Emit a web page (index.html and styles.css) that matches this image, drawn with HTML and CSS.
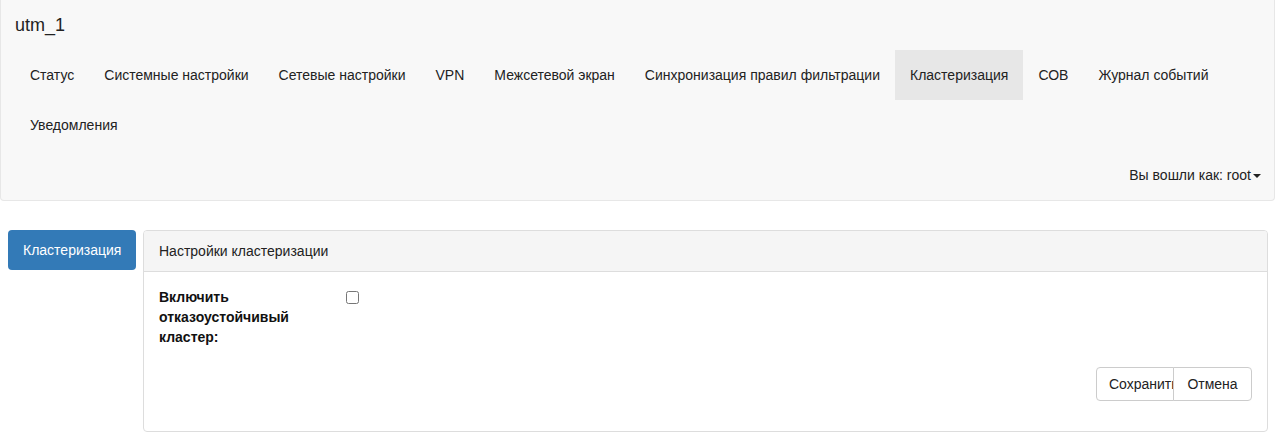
FILE: index.html
```html
<!DOCTYPE html>
<html lang="ru">
<head>
<meta charset="utf-8">
<title>utm_1</title>
<link rel="stylesheet" href="styles.css">
</head>
<body>
<nav class="navbar">
  <div class="brand-row"><a class="brand" href="#">utm_1</a></div>
  <ul class="nav">
    <li><a href="#">Статус</a></li>
    <li><a href="#">Системные настройки</a></li>
    <li><a href="#">Сетевые настройки</a></li>
    <li><a href="#">VPN</a></li>
    <li><a href="#">Межсетевой экран</a></li>
    <li><a href="#">Синхронизация правил фильтрации</a></li>
    <li class="active"><a href="#">Кластеризация</a></li>
    <li><a href="#">СОВ</a></li>
    <li><a href="#">Журнал событий</a></li>
    <li><a href="#">Уведомления</a></li>
  </ul>
  <div class="user-row"><a class="user" href="#">Вы вошли как: root<span class="caret"></span></a></div>
</nav>
<main class="layout">
  <aside class="side">
    <a class="pill" href="#">Кластеризация</a>
  </aside>
  <section class="panel">
    <div class="panel-heading">Настройки кластеризации</div>
    <div class="panel-body">
      <div class="form-row">
        <label class="form-label" for="ha">Включить отказоустойчивый кластер:</label>
        <div class="form-field"><input type="checkbox" id="ha" class="check"></div>
      </div>
      <div class="actions">
        <div class="btn-group">
          <button class="btn btn-save" type="button">Сохранить</button><button class="btn btn-cancel" type="button">Отмена</button>
        </div>
      </div>
    </div>
  </section>
</main>
</body>
</html>
```
FILE: styles.css
```css
* { box-sizing: border-box; }
html, body { margin: 0; padding: 0; }
body {
  font-family: "Liberation Sans", Arial, sans-serif;
  font-size: 14px;
  line-height: 20px;
  color: #333;
  background: #fff;
}
a { text-decoration: none; color: inherit; }

.navbar {
  background: #f8f8f8;
  border: 1px solid #e7e7e7;
  border-top: 0;
  border-radius: 0 0 4px 4px;
}
.brand-row { height: 50px; }
.brand {
  display: block;
  padding: 15px 14px;
  font-size: 18px;
  line-height: 20px;
  color: #222;
}
.nav {
  list-style: none;
  margin: 0;
  padding: 0 14px;
  display: flex;
  flex-wrap: wrap;
}
.nav a {
  display: block;
  padding: 15px;
  color: #222;
}
.nav .active a { background: #e7e7e7; }
.user-row {
  display: flex;
  justify-content: flex-end;
}
.user {
  display: block;
  padding: 15px 13px 15px 15px;
  color: #222;
}
.caret {
  display: inline-block;
  width: 0;
  height: 0;
  margin-left: 2px;
  vertical-align: middle;
  border-top: 4px solid #222;
  border-left: 4px solid transparent;
  border-right: 4px solid transparent;
}

.layout {
  display: flex;
  align-items: flex-start;
  gap: 7px;
  padding: 29px 7px 0 8px;
}
.side { width: 128px; flex: none; }
.pill {
  display: block;
  padding: 10px 15px;
  background: #337ab7;
  color: #fff;
  border-radius: 4px;
}
.panel {
  flex: 1;
  border: 1px solid #ddd;
  border-radius: 4px;
  background: #fff;
}
.panel-heading {
  padding: 10px 15px;
  background: #f5f5f5;
  border-bottom: 1px solid #ddd;
  border-radius: 3px 3px 0 0;
  color: #222;
}
.panel-body { padding: 15px; }
.form-row { display: flex; }
.form-label {
  width: 183px;
  padding-right: 15px;
  font-weight: bold;
  color: #111;
}
.check {
  width: 13px;
  height: 13px;
  margin: 4px 0 0 4px;
}
.actions {
  display: flex;
  justify-content: flex-end;
  margin: 20px 0 15px;
}
.btn-group { display: flex; }
.btn {
  font-family: inherit;
  font-size: 14px;
  line-height: 20px;
  padding: 6px 12px;
  border: 1px solid #ccc;
  background: #fff;
  color: #222;
  white-space: nowrap;
  text-align: left;
  overflow: visible;
  margin: 0;
}
.btn-save {
  width: 78px;
  border-radius: 4px 0 0 4px;
}
.btn-cancel {
  width: 79px;
  margin-left: -1px;
  text-align: center;
  border-radius: 0 4px 4px 0;
}
```
